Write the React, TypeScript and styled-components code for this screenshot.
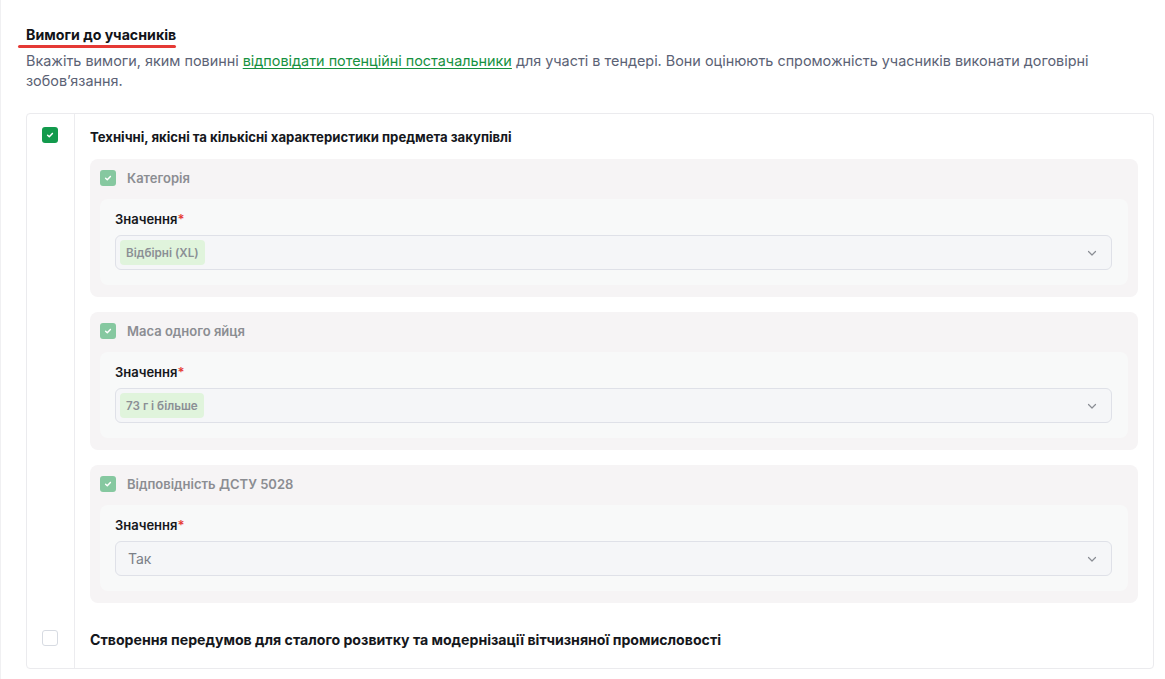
import React from 'react';
import styled, { createGlobalStyle } from 'styled-components';

const GlobalStyle = createGlobalStyle`
  html, body {
    margin: 0;
    padding: 0;
    background: #ffffff;
    font-family: Inter, "Noto Sans", "Liberation Sans", sans-serif;
  }
  * { box-sizing: border-box; }
`;

interface ICriterion {
  name: string;
  tag?: string;
  value?: string;
}

const criteria: ICriterion[] = [
  { name: 'Категорія', tag: 'Відбірні (XL)' },
  { name: 'Маса одного яйця', tag: '73 г і більше' },
  { name: 'Відповідність ДСТУ 5028', value: 'Так' },
];

const Check = ({ checked = false, soft = false }: { checked?: boolean; soft?: boolean }) => (
  <CheckBox checked={checked} soft={soft}>
    {checked && (
      <svg width="8" height="8" viewBox="0 0 10 10" fill="none">
        <path d="M2 5.3 L4.1 7.3 L8 3" stroke="#fff" strokeWidth="1.8" strokeLinecap="round" strokeLinejoin="round" />
      </svg>
    )}
  </CheckBox>
);

const Chevron = () => (
  <svg width="10" height="10" viewBox="0 0 10 10" fill="none">
    <path d="M1.5 3.5 L5 7 L8.5 3.5" stroke="#8a8d94" strokeWidth="1.2" strokeLinecap="round" strokeLinejoin="round" />
  </svg>
);

const CriterionPanel = ({ item }: { item: ICriterion }) => (
  <Panel>
    <PanelHead>
      <Check checked soft />
      <PanelLabel>{item.name}</PanelLabel>
    </PanelHead>
    <Inner>
      <FieldLabel>
        Значення<Star>*</Star>
      </FieldLabel>
      <Select>
        {item.tag ? <Tag>{item.tag}</Tag> : <SelectText>{item.value}</SelectText>}
        <Chevron />
      </Select>
    </Inner>
  </Panel>
);

export default function App() {
  return (
    <Page>
      <GlobalStyle />
      <Heading>Вимоги до учасників</Heading>
      <Description>
        Вкажіть вимоги, яким повинні <Link href="#">відповідати потенційні постачальники</Link> для участі в
        тендері. Вони оцінюють спроможність учасників виконати договірні зобов’язання.
      </Description>
      <Card>
        <Row top={13} bottom={10}>
          <Side>
            <Check checked />
          </Side>
          <Content>
            <RowTitle size={13.15}>Технічні, якісні та кількісні характеристики предмета закупівлі</RowTitle>
            <Panels>
              {criteria.map((c) => (
                <CriterionPanel key={c.name} item={c} />
              ))}
            </Panels>
          </Content>
        </Row>
        <Row top={17} bottom={19}>
          <Side>
            <Check />
          </Side>
          <Content>
            <RowTitle size={14.15}>Створення передумов для сталого розвитку та модернізації вітчизняної промисловості</RowTitle>
          </Content>
        </Row>
      </Card>
    </Page>
  );
}

const Page = styled.div`
  min-height: 679px;
  padding: 24px 11px 0 25px;
  border-left: 1px solid #f0f0f2;
`;

const Heading = styled.h2`
  position: relative;
  display: inline-block;
  margin: 0;
  font-size: 14.2px;
  line-height: 18px;
  font-weight: 700;
  color: #111318;

  &::after {
    content: '';
    position: absolute;
    left: -8px;
    right: 0;
    bottom: -4px;
    height: 3px;
    border-radius: 2px;
    background: #e53935;
  }
`;

const Description = styled.p`
  margin: 7px 0 0;
  max-width: 1100px;
  font-size: 14.4px;
  line-height: 20px;
  color: #5b6275;
`;

const Link = styled.a`
  color: #16913f;
  text-decoration: underline;
  text-underline-offset: 2px;
`;

const Card = styled.div`
  margin-top: 22px;
  width: 1128px;
  border: 1px solid #ebebee;
  border-radius: 4px;
  display: flex;
  flex-direction: column;
`;

const Row = styled.div<{ top: number; bottom: number }>`
  display: flex;
  & > * {
    padding-top: ${({ top }) => top}px;
    padding-bottom: ${({ bottom }) => bottom}px;
  }
`;

const Side = styled.div`
  width: 48px;
  flex: 0 0 48px;
  display: flex;
  justify-content: center;
  align-items: flex-start;
  padding-right: 1px;
  border-right: 1px solid #ececef;
`;

const Content = styled.div`
  flex: 1;
  padding-left: 15px;
  padding-right: 15px;
`;

const RowTitle = styled.div<{ size: number }>`
  font-size: ${({ size }) => size}px;
  line-height: 18px;
  font-weight: 700;
  color: #15171c;
  margin-top: 1px;
`;

const CheckBox = styled.div<{ checked: boolean; soft: boolean }>`
  width: 16px;
  height: 16px;
  flex: 0 0 16px;
  border-radius: 3px;
  display: flex;
  align-items: center;
  justify-content: center;
  background: ${({ checked, soft }) => (!checked ? '#fff' : soft ? '#86c8a0' : '#129a4c')};
  border: ${({ checked }) => (checked ? 'none' : '1px solid #d7dbe2')};
`;

const Panels = styled.div`
  margin-top: 13px;
  display: flex;
  flex-direction: column;
  gap: 15px;
`;

const Panel = styled.div`
  background: #f6f4f5;
  border-radius: 8px;
  padding: 11px 10px 12px;
`;

const PanelHead = styled.div`
  display: flex;
  align-items: center;
  gap: 11px;
  height: 16px;
`;

const PanelLabel = styled.span`
  font-size: 13px;
  font-weight: 600;
  color: #8b8d92;
`;

const Inner = styled.div`
  margin-top: 13px;
  background: #f8f9f9;
  border-radius: 8px;
  padding: 11px 16px 15px 15px;
`;

const FieldLabel = styled.div`
  font-size: 13px;
  line-height: 18px;
  font-weight: 600;
  color: #15171c;
`;

const Star = styled.span`
  color: #e53935;
`;

const Select = styled.div`
  margin-top: 7px;
  height: 35px;
  background: #f5f6f8;
  border: 1px solid #dfe1e8;
  border-radius: 6px;
  display: flex;
  align-items: center;
  justify-content: space-between;
  padding: 0 14px 0 4px;
`;

const Tag = styled.span`
  height: 25px;
  display: inline-flex;
  align-items: center;
  padding: 0 6px;
  border-radius: 4px;
  background: #e0f4dc;
  font-size: 11.7px;
  font-weight: 600;
  color: #8b8f95;
`;

const SelectText = styled.span`
  padding-left: 8px;
  font-size: 14px;
  color: #7b7f87;
`;
